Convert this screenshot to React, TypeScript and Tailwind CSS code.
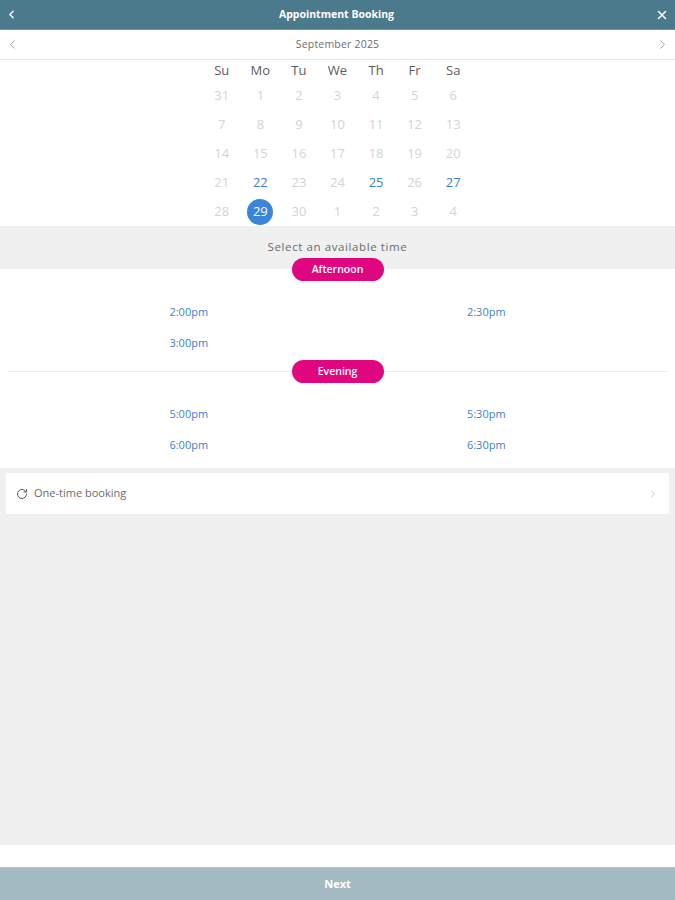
import { ChevronLeft, ChevronRight, RotateCw, X } from "lucide-react";

const weekDays = ["Su", "Mo", "Tu", "We", "Th", "Fr", "Sa"];
const days = [31, 1, 2, 3, 4, 5, 6, 7, 8, 9, 10, 11, 12, 13, 14, 15, 16, 17, 18, 19, 20, 21, 22, 23, 24, 25, 26, 27, 28, 29, 30, 1, 2, 3, 4];
const available = [22, 25, 27];

function Pill({ label }: { label: string }) {
  return (
    <div className="relative z-10 flex h-[23px] w-[92px] items-center justify-center rounded-full bg-[#e0067f] text-[10.5px] font-semibold text-white">
      {label}
    </div>
  );
}

function Slots({ times }: { times: string[] }) {
  return (
    <div className="grid grid-cols-2 px-[40px]">
      {times.map((time) => (
        <div key={time} className="flex h-[30.5px] items-center justify-center text-[11px] text-[#3f7fcb]">
          {time}
        </div>
      ))}
    </div>
  );
}

export default function App() {
  return (
    <div className="flex h-[900px] w-[675px] flex-col bg-[#f0f0f0] font-['Open_Sans',sans-serif]">
      <header className="flex h-[30px] items-center justify-between border-b border-[#6f97a6] bg-[#4b7a8c] pl-[5px] pr-[6px] text-white">
        <ChevronLeft size={13} strokeWidth={2.5} />
        <h1 className="text-[10.5px] font-bold">Appointment Booking</h1>
        <X size={14} strokeWidth={2.5} />
      </header>

      <div className="flex h-[30px] items-center justify-between border-b border-[#e6e6e6] bg-white pl-[5px] pr-[5px] text-[#8a8a8a]">
        <ChevronLeft size={15} strokeWidth={1.25} />
        <span className="text-[10.5px] tracking-[0.2px] text-[#6e6e6e]">September 2025</span>
        <ChevronRight size={15} strokeWidth={1.25} />
      </div>

      <div className="flex h-[166px] flex-col items-center bg-white">
        <div className="grid h-[24px] w-[270px] grid-cols-7 items-center text-center text-[13px] text-[#5c5c5c]">
          {weekDays.map((day) => (
            <div key={day}>{day}</div>
          ))}
        </div>
        <div className="grid w-[270px] grid-cols-7 text-center text-[13px]">
          {days.map((day, index) => {
            const current = index >= 3 && index < 31;
            if (current && day === 29) {
              return (
                <div key={index} className="flex h-[29px] items-center justify-center">
                  <div className="flex h-[26px] w-[26px] items-center justify-center rounded-full bg-[#3a84de] text-white">{day}</div>
                </div>
              );
            }
            const active = current && available.includes(day);
            return (
              <div key={index} className={`flex h-[29px] items-center justify-center ${active ? "text-[#3f7fcb]" : "text-[#d4d4d4]"}`}>
                {day}
              </div>
            );
          })}
        </div>
      </div>

      <div className="flex h-[43px] items-start justify-center bg-[#f0f0f0] pt-[12px] text-[11.5px] leading-[18px] tracking-[0.6px] text-[#6b6b6b]">
        Select an available time
      </div>

      <section className="flex h-[199px] flex-col bg-white">
        <div className="-mt-[11px] flex justify-center">
          <Pill label="Afternoon" />
        </div>
        <div className="mt-[16px]">
          <Slots times={["2:00pm", "2:30pm", "3:00pm"]} />
        </div>
        <div className="relative mx-[8px] mt-[2px] flex justify-center">
          <div className="absolute left-0 right-0 top-[11px] h-px bg-[#ececec]" />
          <Pill label="Evening" />
        </div>
        <div className="mt-[16px]">
          <Slots times={["5:00pm", "5:30pm", "6:00pm", "6:30pm"]} />
        </div>
      </section>

      <div className="mx-[6px] mt-[5px] flex h-[41px] items-center justify-between rounded-[2px] bg-white pl-[10px] pr-[10px]">
        <div className="flex items-center gap-[6px] text-[11px] text-[#6b6b6b]">
          <RotateCw size={12} strokeWidth={1.75} className="text-[#444444]" />
          One-time booking
        </div>
        <ChevronRight size={12} strokeWidth={1.25} className="text-[#a8a8a8]" />
      </div>

      <div className="flex-1" />

      <div className="h-[22px] bg-white" />
      <button className="flex h-[33px] items-center justify-center border-t border-[#b5c8cf] bg-[#a3bac3] text-[11px] font-bold text-white">
        Next
      </button>
    </div>
  );
}
